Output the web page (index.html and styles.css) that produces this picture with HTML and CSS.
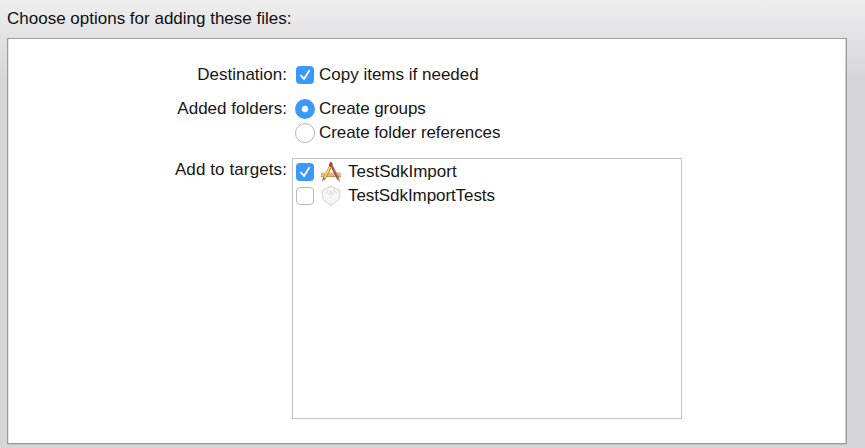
FILE: index.html
```
<!DOCTYPE html>
<html lang="en">
<head>
<meta charset="utf-8">
<title>Add files</title>
<link rel="stylesheet" href="styles.css">
</head>
<body>
<h1 class="title">Choose options for adding these files:</h1>
<main class="panel">
  <div class="row destination">
    <span class="label">Destination:</span>
    <label class="option"><span class="check on"><svg viewBox="0 0 18 18"><path d="M5 9.5 8 13 13.2 4.7"/></svg></span><span>Copy items if needed</span></label>
  </div>
  <div class="row folders">
    <span class="label">Added folders:</span>
    <div class="stack">
      <label class="option"><span class="radio on"></span><span class="tight">Create groups</span></label>
      <label class="option"><span class="radio"></span><span class="tight">Create folder references</span></label>
    </div>
  </div>
  <div class="row targets">
    <span class="label">Add to targets:</span>
    <div class="list">
      <label class="item"><span class="check on"><svg viewBox="0 0 18 18"><path d="M5 9.5 8 13 13.2 4.7"/></svg></span>
        <svg class="icon" viewBox="0 0 22 22" fill="none">
          <path d="M1 11.5h20v4.5H1z" fill="#e9b48c"/><path d="M1 15.5h20" stroke="#d18f5f"/>
          <path d="M10.5 2.5 18.5 18.5" stroke="#944b3b" stroke-width="2.5"/><path d="M12.3 4.5 18 16.5" stroke="#c4958b" stroke-width=".7"/>
          <path d="M18 17l1.8 3.5" stroke="#999" stroke-width="1.4"/>
          <path d="M11 4.5 4.3 17.5" stroke="#b5802b" stroke-width="2.9"/><path d="M10.7 4.5 4.3 17.2" stroke="#f8d34f" stroke-width="1.8"/>
          <path d="M3 16.3 2 20.5 5.6 17.8z" fill="#81714d"/><path d="M10 .8l2.6 1.2-1.3 4.3-2.4-1.1z" fill="#a83f32"/>
        </svg><span>TestSdkImport</span></label>
      <label class="item"><span class="check"></span>
        <svg class="icon" viewBox="0 0 22 22" fill="#f7f7f7" stroke="#cecece" stroke-width=".9" stroke-linejoin="round">
          <path d="M1.8 5.5 8 2.8Q11 0 14 2.8L20.2 5.5 19 14.5 11 20.5 3 14.5z"/><path d="M2 5.5 11 10.5 20 5.5M11 10.5V20" stroke="#e6e6e6" fill="none"/>
          <path d="M7.5 4.5v3c1.2 2 5.8 2 7 0v-3" fill="#fafafa" stroke="#ddd"/><ellipse cx="11" cy="4.3" rx="3.5" ry="1.7" fill="#fff" stroke="#ddd"/><path d="M9.5 6.8h3L11 8.2z" fill="#ccc" stroke="none"/>
        </svg><span class="tight">TestSdkImportTests</span></label>
    </div>
  </div>
</main>
</body>
</html>
```
FILE: styles.css
```
* { box-sizing: border-box; }
body {
  margin: 0;
  height: 448px;
  overflow: hidden;
  padding: 9px 18px 4px 7px;
  background: linear-gradient(#eeeeef 0, #e2e2e4 38px, #d6d6d8 80px, #d6d6d8 100%);
  font: 17px/20px "Liberation Sans", Arial, sans-serif;
  color: #161616;
}
.title { margin: 0 0 9px; font: inherit; white-space: nowrap; color: #101010; }
.panel {
  width: 840px;
  height: 406px;
  padding-top: 26px;
  background: #fff;
  border: 1px solid #9b9b9b;
  box-shadow: inset -1px 0 #d2d2d2, inset 1px 0 #e4e4e4, 0 1px #c0c0c0;
}
.row { display: flex; }
.label { width: 279px; margin-right: 9px; text-align: right; white-space: nowrap; }
.option { display: flex; align-items: center; height: 20px; gap: 5px; white-space: nowrap; }
.folders { margin-top: 14px; }
.stack { display: flex; flex-direction: column; gap: 4px; }
.targets { margin-top: 15px; }
.targets .label { margin-top: 2px; margin-right: 5px; letter-spacing: .1px; }
.check { width: 18px; height: 18px; flex: none; border: 1px solid #bbb; border-radius: 4px; background: #fff; }
.check.on { border: 0; background: #3b99fc; }
.check svg { display: block; width: 18px; height: 18px; fill: none; stroke: #fff; stroke-width: 1.8; stroke-linecap: round; stroke-linejoin: round; }
.radio { width: 20px; height: 20px; flex: none; margin: 0 -1px; border: 1px solid #b4b4b4; border-radius: 50%; background: #fff; }
.radio.on { border: 0; background: radial-gradient(circle, #fff 2.8px, #3b99fc 3.7px); }
.list { width: 390px; height: 261px; border: 1px solid #c2c2c2; padding: 3px 0 0 3px; display: flex; flex-direction: column; gap: 4px; }
.item { display: flex; align-items: center; height: 20px; white-space: nowrap; }
.icon { width: 22px; height: 22px; margin: 0 6px; }
.tight { letter-spacing: -.08px; }
```
